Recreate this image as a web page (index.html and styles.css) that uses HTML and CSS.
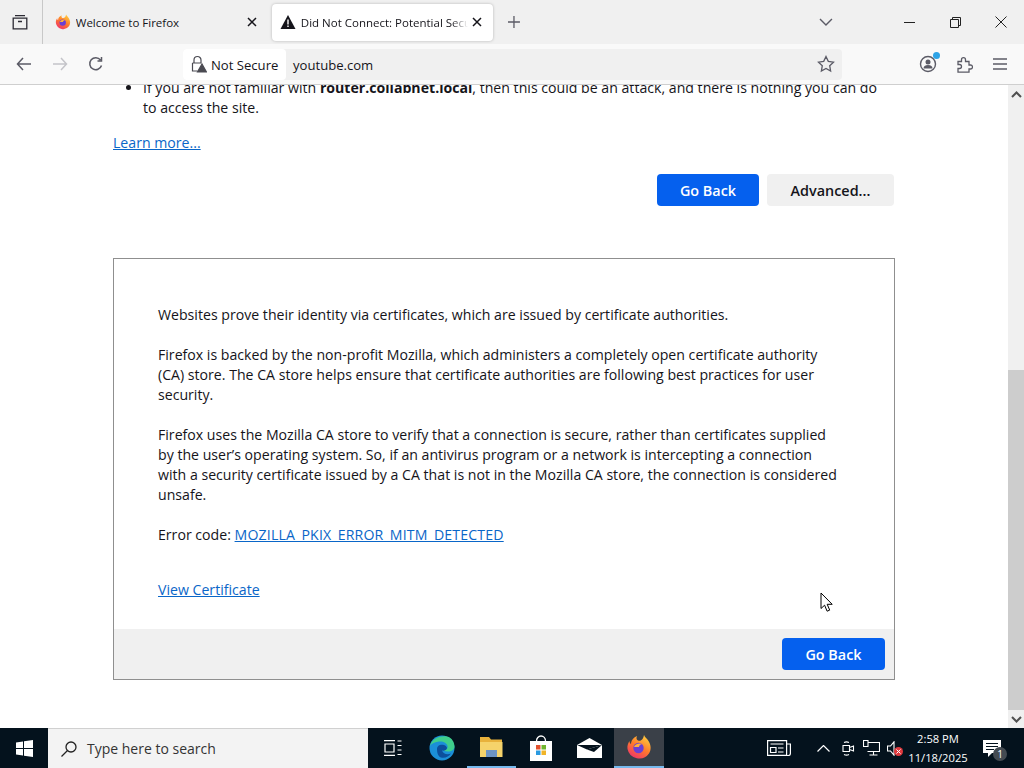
FILE: index.html
```html
<!DOCTYPE html>
<html lang="en">
<head>
    <meta charset="UTF-8">
    <title>Did Not Connect: Potential Security Issue</title>
    <link rel="stylesheet" href="styles.css">
</head>
<body>
    <div class="tabbar">
        <div class="tab-list">
            <svg width="18" height="18" viewBox="0 0 18 18" fill="none" stroke="#2b2a33" stroke-width="1.3"><path d="M4 2.700h10M2.200 5.200h13.600v10.600H2.200zM7 8.500h4"/></svg>
        </div>
        <div class="tab">
            <svg class="tab-icon" width="16" height="16" viewBox="0 0 26 26"><use href="#fx-logo"/></svg>
            <span class="tab-title">Welcome to Firefox</span>
            <svg class="tab-close" width="10" height="10" viewBox="0 0 10 10" stroke="#15141a" stroke-width="1.500"><path d="M1 1l8 8M9 1l-8 8"/></svg>
        </div>
        <div class="tab tab-active">
            <svg class="tab-icon" width="16" height="16" viewBox="0 0 16 16"><path d="M8 1l7.500 14H.5z" fill="#15141a"/><path d="M7.300 5.500h1.400v5H7.300zM7.300 11.500h1.400V13H7.300z" fill="#fff"/></svg>
            <span class="tab-title tab-title-cut">Did Not Connect: Potential Security Issue</span>
            <svg class="tab-close" width="10" height="10" viewBox="0 0 10 10" stroke="#15141a" stroke-width="1.500"><path d="M1 1l8 8M9 1l-8 8"/></svg>
        </div>
        <svg class="new-tab" width="14" height="14" viewBox="0 0 14 14" stroke="#5b5b66" stroke-width="1.300"><path d="M7 1v12M1 7h12"/></svg>
        <svg class="tab-down" width="14" height="8" viewBox="0 0 14 8" fill="none" stroke="#5b5b66" stroke-width="1.400"><path d="M1 1l6 6 6-6"/></svg>
        <div class="win-btn"><svg width="11" height="11" viewBox="0 0 11 11" stroke="#222" fill="none"><path d="M0 5.500h11"/></svg></div>
        <div class="win-btn"><svg width="11" height="11" viewBox="0 0 11 11" stroke="#222" fill="none"><path d="M.5 2.500h8v8h-8zM2.500 2.500v-2h8v8h-2"/></svg></div>
        <div class="win-btn"><svg width="12" height="12" viewBox="0 0 12 12" stroke="#222" fill="none"><path d="M.5.5l11 11M11.500.5l-11 11"/></svg></div>
    </div>

    <div class="toolbar">
        <div class="nav-btns">
            <svg width="16" height="14" viewBox="0 0 16 14" fill="none" stroke="#5b5b66" stroke-width="1.500"><path d="M15 7H1.500M7 1L1.500 7 7 13"/></svg>
            <svg width="16" height="14" viewBox="0 0 16 14" fill="none" stroke="#c4c4c9" stroke-width="1.500"><path d="M1 7h13.500M9 1l5.500 6L9 13"/></svg>
            <svg width="16" height="16" viewBox="0 0 16 16" fill="none" stroke="#5b5b66" stroke-width="1.500"><path d="M13.500 9.500A6 6 0 1 1 12.500 4M13.500 1v4h-4"/></svg>
        </div>
        <div class="urlbar">
            <div class="not-secure">
                <svg width="17" height="18" viewBox="0 0 17 18" fill="none" stroke="#4a4a52" stroke-width="1.200"><path d="M4 8V5a3.500 3.500 0 0 1 7 0v3M2.500 8h9M2.500 8v8h5"/><path d="M12 9l4.500 8h-9z" fill="#4a4a52"/></svg>
                <span class="url-text">Not Secure</span>
            </div>
            <span class="url url-text">youtube.com</span>
            <svg class="star" width="18" height="18" viewBox="0 0 18 18" fill="none" stroke="#5b5b66" stroke-width="1.300"><path d="M9 1.500l2.300 4.900 5.200.7-3.800 3.600.9 5.300L9 13.400l-4.600 2.600.9-5.300L1.500 7.100l5.200-.7z"/></svg>
        </div>
        <div class="tool-btns">
            <div class="profile">
                <svg width="18" height="18" viewBox="0 0 18 18"><circle cx="9" cy="9" r="7.500" fill="none" stroke="#5b5b66" stroke-width="1.400"/><circle cx="9" cy="7" r="2.500" fill="#5b5b66"/><path d="M4.500 13.500a4.500 3.500 0 0 1 9 0z" fill="#5b5b66"/></svg>
                <span class="profile-dot"></span>
            </div>
            <svg width="16" height="17" viewBox="0 0 16 17" fill="none" stroke="#5b5b66" stroke-width="1.300"><path d="M1 5.500h3.500V3.700a2 2 0 0 1 4 0v1.800H12V9h1.500a2 2 0 0 1 0 4H12v3.200H1v-3.700h1.500a2 2 0 0 0 0-4H1z"/></svg>
            <svg width="14" height="12" viewBox="0 0 14 12" stroke="#5b5b66" stroke-width="1.300"><path d="M0 1h14M0 6h14M0 11h14"/></svg>
        </div>
    </div>

    <div class="viewport">
        <div class="page">
            <ul class="reasons">
                <li>If you are not familiar with <b>router.collabnet.local</b>, then this could be an attack, and there is nothing you can do<br>to access the site.</li>
            </ul>
            <a class="link learn-more" href="#">Learn more...</a>
            <div class="actions">
                <button class="btn btn-primary">Go Back</button>
                <button class="btn btn-plain">Advanced...</button>
            </div>
            <div class="advanced">
                <div class="advanced-body">
                    <p>Websites prove their identity via certificates, which are issued by certificate authorities.</p>
                    <p>Firefox is backed by the non-profit Mozilla, which administers a completely open certificate authority<br>(CA) store. The CA store helps ensure that certificate authorities are following best practices for user<br>security.</p>
                    <p>Firefox uses the Mozilla CA store to verify that a connection is secure, rather than certificates supplied<br>by the user’s operating system. So, if an antivirus program or a network is intercepting a connection<br>with a security certificate issued by a CA that is not in the Mozilla CA store, the connection is considered<br>unsafe.</p>
                    <p>Error code: <a class="link error-link" href="#">MOZILLA_PKIX_ERROR_MITM_DETECTED</a></p>
                    <a class="link view-cert" href="#">View Certificate</a>
                </div>
                <div class="advanced-foot">
                    <button class="btn btn-primary">Go Back</button>
                </div>
            </div>
        </div>
        <div class="scrollbar">
            <svg width="11" height="7" viewBox="0 0 11 7" fill="none" stroke="#505050" stroke-width="2"><path d="M1 6l4.500-4.500L10 6"/></svg>
            <div class="scroll-track"><div class="scroll-thumb"></div></div>
            <svg width="11" height="7" viewBox="0 0 11 7" fill="none" stroke="#505050" stroke-width="2"><path d="M1 1l4.500 4.500L10 1"/></svg>
        </div>
        <svg class="cursor" width="14" height="21" viewBox="0 0 14 21"><path d="M1 1v15.500l3.600-3.300 2.500 6 2.600-1.100-2.500-5.800h5z" fill="#fff" stroke="#000"/></svg>
    </div>

    <div class="taskbar">
        <div class="start">
            <svg width="17" height="17" viewBox="0 0 17 17" fill="#fff"><path d="M0 2.400l7-1V8H0zM8 1.200L17 0v8H8zM0 9h7v6.600l-7-1zM8 9h9v8l-9-1.200z"/></svg>
        </div>
        <div class="search">
            <svg width="18" height="18" viewBox="0 0 18 18" fill="none" stroke="#222" stroke-width="1.300"><circle cx="11" cy="7" r="5"/><path d="M7.500 10.500L1.500 16.500"/></svg>
            <span>Type here to search</span>
        </div>
        <div class="task-icons">
            <div class="task-icon">
                <svg width="18" height="16" viewBox="0 0 18 16" fill="none" stroke="#fff" stroke-width="1.200"><path d="M0 .6h11M0 15.400h11M1 4h9v8H1zM13.500 1h4M13.500 5.500h4M13.500 10h4M13.500 14.500h4"/></svg>
            </div>
            <div class="task-icon">
                <svg width="26" height="26" viewBox="0 0 26 26"><circle cx="13" cy="13" r="12.500" fill="#1b8fd8"/><path d="M1 11C3 3 12 .5 18 1.500c5 1 7.500 6 7.500 10 0 3.500-3 5-6.500 5-3 0-5-1-5-1 4 0 5-2.500 4.500-4.500C18 8 14 6 10 6.500 5 7 2 9 1 11z" fill="#3fce8c"/><path d="M8 14c0-4 4-5 7-4 1.500.5 3 2 3 3 0 2-3 3-5 2.500 1 3 5 5 9 3-2 3-6 5-10 4-3-1-4-5-4-8.500z" fill="#0c4f9c"/></svg>
            </div>
            <div class="task-icon task-running">
                <svg width="24" height="20" viewBox="0 0 24 20"><path d="M1 0h9l2 2.500h11V6H1z" fill="#e8b23c"/><path d="M1 5h22.500v15H1z" fill="#f5d36b"/><path d="M7 13h11v7H7z" fill="#6d94c4"/></svg>
            </div>
            <div class="task-icon">
                <svg width="24" height="26" viewBox="0 0 24 26"><path d="M7.500 6a4.500 5 0 0 1 9 0" fill="none" stroke="#fff" stroke-width="1.300"/><path d="M1 6h22v20H1z" fill="#fff"/><path d="M7 10h4.500v4.500H7z" fill="#e3512d"/><path d="M12.500 10H17v4.500h-4.500z" fill="#6fb52e"/><path d="M7 15.500h4.500V20H7z" fill="#2a9ae0"/><path d="M12.500 15.500H17V20h-4.500z" fill="#f0b429"/></svg>
            </div>
            <div class="task-icon">
                <svg width="25" height="20" viewBox="0 0 25 20"><path d="M0 7L12.500 0 25 7v13H0z" fill="#fff"/><path d="M0 7l25 0-15 4.500L0 7z" fill="#04121d"/><path d="M10 11.500L25 7 17 14z" fill="#04121d"/></svg>
            </div>
            <div class="task-icon task-running task-current">
                <svg width="26" height="26" viewBox="0 0 26 26">
                    <defs>
                        <linearGradient id="fx-ring" x1="0.8" y1="0" x2="0.2" y2="1">
                            <stop offset="0" stop-color="#ffd13f"/>
                            <stop offset="0.5" stop-color="#ff7a2b"/>
                            <stop offset="1" stop-color="#ee2f6e"/>
                        </linearGradient>
                    </defs>
                    <g id="fx-logo">
                        <path d="M18 1c1 2.500 3 3.500 4.500 6 2.500 4 3 8.500.5 12.500A12 12 0 0 1 1.500 15C1 12 2 9 3.500 7c0 1.500.5 2.500 1.500 3 0-3 2-6.500 6-8-1 2-.5 3.500 1 4.500 2 .5 5 .5 6-5.500z" fill="url(#fx-ring)"/>
                        <circle cx="12.500" cy="14" r="5.200" fill="#6b3fd4"/>
                        <path d="M8 13c1-3 5-4.500 8-3-2 .5-3 1.500-3 3z" fill="#ffb13b"/>
                    </g>
                </svg>
            </div>
        </div>
        <div class="tray">
            <svg class="tray-news" width="24" height="16" viewBox="0 0 24 16" fill="none" stroke="#fff" stroke-width="1.200"><path d="M.6.6h19v14.800H.6zM20 4h3.400v9.500a2 2 0 0 1-2 2H2M3.500 4h13M3.500 7.500h5.500v5H3.500zM11 8h5.500M11 12h5.500"/></svg>
            <svg class="tray-up" width="13" height="7" viewBox="0 0 13 7" fill="none" stroke="#fff" stroke-width="1.200"><path d="M.5 6.500l6-6 6 6"/></svg>
            <svg class="tray-meet" width="14" height="17" viewBox="0 0 14 17" fill="none" stroke="#fff" stroke-width="1.100"><path d="M2 5.500h6.500v6H2zM8.500 7.500l4-1.500v5l-4-1.500M3 2.500a6 6 0 0 1 5 0M3 14.500a6 6 0 0 0 5 0"/></svg>
            <svg class="tray-net" width="17" height="16" viewBox="0 0 17 16" fill="none" stroke="#fff" stroke-width="1.100"><path d="M4.500 2.500h12v9h-12M10.500 11.500v3.500M6.500 15h8M.5.500h4.500v6H.5z"/></svg>
            <div class="tray-sound">
                <svg width="10" height="15" viewBox="0 0 10 15" fill="none" stroke="#fff" stroke-width="1.100"><path d="M.5 5h3L7 .8v13.400L3.500 10h-3z"/></svg>
                <svg class="mute" width="9" height="9" viewBox="0 0 9 9"><circle cx="4.500" cy="4.500" r="4.500" fill="#e0393e"/><path d="M2.500 2.500l4 4M6.500 2.500l-4 4" stroke="#fff"/></svg>
            </div>
            <div class="clock">
                <div>2:58 PM</div>
                <div>11/18/2025</div>
            </div>
            <div class="notify">
                <svg width="18" height="17" viewBox="0 0 18 17" fill="#fff"><path d="M0 0h18v13H9l-4 4v-4H0z"/><path d="M3 3.500h12M3 6.500h12M3 9.500h8" stroke="#04121d"/></svg>
                <span class="notify-count">1</span>
            </div>
        </div>
    </div>
</body>
</html>
```

FILE: styles.css
```css
html, body {
    margin: 0;
    height: 768px;
    overflow: hidden;
    background-color: #fff;
    font-family: "Open Sans", sans-serif;
    color: #15141a;
}

/* tab strip */
.tabbar {
    display: flex;
    align-items: center;
    height: 44px;
    background-color: #f0f0f0;
}
.tab-list {
    display: flex;
    align-items: center;
    justify-content: center;
    width: 40px;
    height: 44px;
    padding-right: 2px;
    border-right: 1px solid #c8c8c8;
}
.tab {
    display: flex;
    align-items: center;
    box-sizing: border-box;
    width: 221px;
    height: 37px;
    padding: 0 8px 0 10px;
    margin: 0 3px 0 2px;
    font-size: 11.5px;
    border-radius: 4px;
}
.tab-active {
    margin-left: 4px;
    padding: 0 11px 0 8px;
    background-color: #fff;
    box-shadow: 0 0 3px rgba(0, 0, 0, 0.25);
}
.tab-icon {
    flex: none;
    margin-right: 5px;
}
.tab-title {
    flex: 1;
    white-space: nowrap;
    overflow: hidden;
}
.tab-title-cut {
    -webkit-mask-image: linear-gradient(to right, #000 90%, transparent);
    mask-image: linear-gradient(to right, #000 90%, transparent);
}
.tab-close {
    flex: none;
    margin-left: 4px;
}
.new-tab {
    margin-left: 11px;
}
.tab-down {
    margin-left: 298px;
    margin-right: 54px;
}
.win-btn {
    display: flex;
    align-items: center;
    justify-content: center;
    width: 46px;
    height: 44px;
}

/* nav toolbar */
.toolbar {
    display: flex;
    align-items: center;
    box-sizing: border-box;
    height: 41px;
    background-color: #f9f9f9;
    border-bottom: 1px solid #cfcfcf;
}
.nav-btns {
    display: flex;
    align-items: center;
    gap: 20px;
    width: 183px;
    box-sizing: border-box;
    padding-left: 16px;
}
.urlbar {
    display: flex;
    align-items: center;
    width: 659px;
    height: 31px;
    background-color: #f0f0f0;
    border-radius: 4px;
    font-size: 13.1px;
}
.url-text {
    padding-top: 1px;
}
.not-secure {
    display: flex;
    align-items: center;
    gap: 4px;
    box-sizing: border-box;
    width: 103px;
    height: 31px;
    padding-left: 7px;
    background-color: #fff;
    border-radius: 4px;
    white-space: nowrap;
}
.url {
    margin-left: 7px;
}
.star {
    margin-left: auto;
    margin-right: 7px;
}
.tool-btns {
    display: flex;
    align-items: center;
    gap: 20px;
    margin-left: 77px;
}
.profile {
    position: relative;
    display: flex;
}
.profile-dot {
    position: absolute;
    top: -3px;
    right: -3px;
    width: 7px;
    height: 7px;
    border-radius: 50%;
    background-color: #2ea3e6;
}

/* page content */
.viewport {
    position: relative;
    display: flex;
    height: 643px;
    overflow: hidden;
    background-color: #fff;
}
.page {
    flex: 1;
    box-sizing: border-box;
    padding: 0 113px;
    font-size: 14.13px;
    line-height: 20px;
}
.reasons {
    margin: -7px 0 0;
    padding: 0 0 0 30px;
}
.link {
    color: #0a66c8;
    text-decoration: underline;
}
.error-link {
    letter-spacing: 0.16px;
}
.learn-more {
    display: block;
    margin-top: 15px;
}
.actions {
    display: flex;
    justify-content: flex-end;
    gap: 8px;
    margin: 21px 1px 0 0;
}
.btn {
    height: 32px;
    border: none;
    border-radius: 4px;
    font-family: inherit;
    font-size: 14.4px;
    font-weight: 600;
}
.btn-primary {
    width: 103px;
    background-color: #0560ee;
    color: #fff;
}
.actions .btn-primary {
    width: 102px;
}
.btn-plain {
    width: 127px;
    background-color: #f0f0f0;
    color: #15141a;
}
.advanced {
    box-sizing: border-box;
    width: 782px;
    height: 422px;
    margin-top: 52px;
    border: 1px solid #8f8f8f;
    display: flex;
    flex-direction: column;
}
.advanced-body {
    flex: 1;
    padding: 46px 20px 0 44px;
}
.advanced-body p {
    margin: 0 0 20px;
}
.view-cert {
    display: block;
    margin-top: 35px;
}
.advanced-foot {
    display: flex;
    justify-content: flex-end;
    align-items: center;
    height: 50px;
    padding-right: 9px;
    background-color: #f0f0f0;
}

/* scrollbar */
.scrollbar {
    display: flex;
    flex-direction: column;
    align-items: center;
    flex: none;
    width: 17px;
    background-color: #f0f0f0;
    padding: 6px 0 5px;
    box-sizing: border-box;
}
.scroll-track {
    flex: 1;
    width: 17px;
    margin: 0 0 4px;
}
.scroll-thumb {
    width: 17px;
    height: 340px;
    margin-top: 272px;
    background-color: #cdcdcd;
}
.cursor {
    position: absolute;
    left: 820px;
    top: 507px;
}

/* windows taskbar */
.taskbar {
    display: flex;
    align-items: center;
    height: 40px;
    background-color: #04121d;
    color: #fff;
}
.start {
    display: flex;
    align-items: center;
    justify-content: center;
    width: 48px;
    height: 40px;
}
.search {
    display: flex;
    align-items: center;
    gap: 9px;
    box-sizing: border-box;
    width: 320px;
    height: 40px;
    padding-left: 12px;
    background-color: #f3f3f3;
    border-top: 1px solid #d0d0d0;
    color: #333;
    font-size: 14px;
}
.task-icons {
    display: flex;
    margin-left: 0.5px;
}
.task-icon {
    display: flex;
    align-items: center;
    justify-content: center;
    box-sizing: border-box;
    width: 49.2px;
    height: 40px;
}
.task-running {
    border-bottom: 2px solid #76b9ed;
}
.task-current {
    background-color: #3a4048;
}
.tray {
    display: flex;
    align-items: center;
    margin-left: auto;
}
.tray-news {
    margin-right: 26px;
}
.tray-up {
    margin-right: 11px;
}
.tray-meet {
    margin-right: 8px;
}
.tray-net {
    margin-right: 7px;
}
.tray-sound {
    position: relative;
    display: flex;
    width: 15px;
}
.mute {
    position: absolute;
    left: 7px;
    top: 6px;
}
.clock {
    width: 72px;
    text-align: center;
    font-size: 11.2px;
    line-height: 19px;
}
.notify {
    position: relative;
    display: flex;
    align-items: center;
    box-sizing: border-box;
    width: 50px;
    padding-left: 9px;
}
.notify-count {
    position: absolute;
    left: 19px;
    top: 7px;
    width: 14px;
    height: 14px;
    border-radius: 50%;
    background-color: #444b52;
    font-size: 10px;
    line-height: 14px;
    text-align: center;
}
```
